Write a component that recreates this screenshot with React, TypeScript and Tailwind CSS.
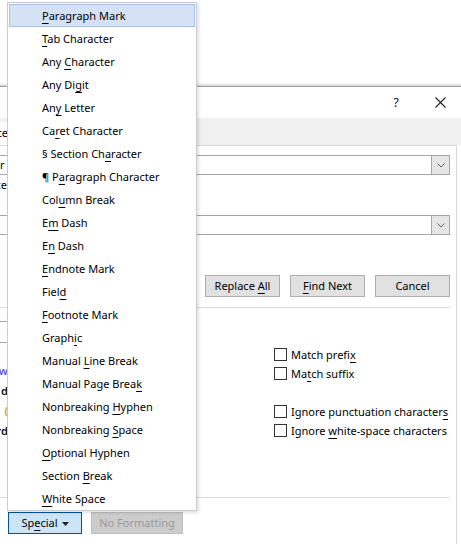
import React from 'react';

const items = [
  '&Paragraph Mark',
  '&Tab Character',
  'Any &Character',
  'Any Di&git',
  'An&y Letter',
  'Ca&ret Character',
  '§ Section Ch&aracter',
  '¶ P&aragraph Character',
  'Col&umn Break',
  'E&m Dash',
  'E&n Dash',
  '&Endnote Mark',
  'Fiel&d',
  '&Footnote Mark',
  'Graph&ic',
  'Manual &Line Break',
  'Manual Page Brea&k',
  'Nonbreaking &Hyphen',
  'Nonbreaking &Space',
  '&Optional Hyphen',
  'Section &Break',
  '&White Space',
];

function L({ t }: { t: string }) {
  const i = t.indexOf('&');
  if (i < 0) return <span className="whitespace-pre">{t}</span>;
  return (
    <span className="whitespace-pre">
      {t.slice(0, i)}
      <span className="underline underline-offset-[3px] decoration-1">{t[i + 1]}</span>
      {t.slice(i + 2)}
    </span>
  );
}

function Chevron() {
  return (
    <svg width="8" height="5" viewBox="0 0 8 5" className="text-[#606060]">
      <path d="M0.5 0.5 L4 4 L7.5 0.5" fill="none" stroke="currentColor" strokeWidth="1" />
    </svg>
  );
}

function Combo({ left }: { left?: string }) {
  return (
    <div className="flex h-[20px] w-[450px]">
      <div className="flex-1 border-y border-[#a6a6a6]">
        {left && <div className="w-[7px] overflow-hidden whitespace-nowrap leading-[18px]">{left}</div>}
      </div>
      <div className="flex h-[20px] w-[19px] items-center justify-center border border-[#a6a6a6] bg-[#e6e6e6]">
        <Chevron />
      </div>
    </div>
  );
}

function Btn({ t }: { t: string }) {
  return (
    <div className="flex h-[22px] w-[75px] items-center justify-center border border-[#adadad] bg-[#e1e1e1] pt-px text-black">
      <L t={t} />
    </div>
  );
}

function Check({ t }: { t: string }) {
  return (
    <div className="flex h-[19px] items-center gap-[4px] whitespace-nowrap">
      <div className="h-[13px] w-[13px] shrink-0 border border-[#333] bg-white" />
      <span className="pt-px text-black">
        <L t={t} />
      </span>
    </div>
  );
}

function Frag({ t, c }: { t: string; c: string }) {
  return (
    <div className={`flex h-[20px] w-[8px] items-center justify-end overflow-hidden whitespace-nowrap font-semibold ${c}`}>
      {t}
    </div>
  );
}

export default function App() {
  return (
    <div className="relative h-[544px] w-[461px] overflow-hidden bg-white font-['Noto_Sans',sans-serif] text-[11px] text-black">
      <div className="h-[83px]" />
      <div className="h-[3px] bg-gradient-to-b from-white to-[#d4d4d4]" />
      <div className="border-t border-[#a0a0a0]">
        {/* title bar */}
        <div className="flex h-[31px] items-center justify-end pr-[15px]">
          <span className="w-[20px] text-center text-[13px] text-[#222]">?</span>
          <svg width="11" height="11" viewBox="0 0 11 11" className="ml-[29px]">
            <path d="M0.5 0.5 L10.5 10.5 M10.5 0.5 L0.5 10.5" stroke="#222" strokeWidth="1.1" />
          </svg>
        </div>
        {/* tab strip */}
        <div className="flex h-[27px] bg-[#f0f0f0]">
          <div className="mt-[4px] flex w-[8px] items-center justify-end overflow-hidden whitespace-nowrap bg-white">
            Replace
          </div>
        </div>
        {/* tab page */}
        <div className="h-[400px] w-[457px] border-t border-r border-[#d9d9d9]">
          <div className="pt-[9px]">
            <Combo left="r p" />
            <div className="flex h-[20px] w-[7px] items-center justify-end overflow-hidden whitespace-nowrap">Replace</div>
            <div className="h-[20px]" />
            <Combo />
          </div>
          <div className="mt-[40px] flex w-[450px] justify-end gap-[10px]">
            <Btn t="Replace &All" />
            <Btn t="&Find Next" />
            <Btn t="Cancel" />
          </div>
          <div className="mt-[10px] h-px w-[450px] bg-[#dcdcdc]" />
          <div className="flex h-[189px]">
            <div className="w-[8px] shrink-0">
              <div className="mt-[13px] h-[22px] border-y border-[#a6a6a6]" />
              <div className="mt-[18px]">
                <Frag t="w" c="text-[#5a5ac8] font-normal" />
                <Frag t="d" c="text-[#111]" />
                <Frag t="(" c="text-[#c9a400]" />
                <Frag t="rd" c="text-[#111]" />
              </div>
            </div>
            <div className="ml-[266px] pt-[37px]">
              <Check t="Match prefi&x" />
              <Check t="Ma&tch suffix" />
              <div className="h-[19px]" />
              <Check t="Ignore punctuation character&s" />
              <Check t="Ignore &white-space characters" />
            </div>
          </div>
          <div className="h-px w-[450px] bg-[#dcdcdc]" />
          <div className="mt-[14px] flex gap-[9px] pl-[8px]">
            <div className="flex h-[22px] w-[74px] items-center justify-center gap-[4px] border border-[#005499] bg-[#cce4f7] pt-px text-black">
              <L t="Sp&ecial" />
              <svg width="7" height="4" viewBox="0 0 7 4">
                <path d="M0 0 L7 0 L3.5 4 Z" fill="#222" />
              </svg>
            </div>
            <div className="flex h-[22px] w-[92px] items-center justify-center border border-[#bfbfbf] bg-[#cccccc] pt-px text-[#9a9a9a]">
              No Formatting
            </div>
          </div>
        </div>
      </div>

      {/* dropdown menu */}
      <div className="absolute left-[7px] top-[2px] w-[190px] border border-[#cccccc] bg-white pt-[1px] shadow-[2px_2px_3px_rgba(0,0,0,0.12)]">
        {items.map((t, i) => (
          <div
            key={t}
            className={`flex h-[23px] items-center pt-px ${i === 0 ? 'mx-[1px] border border-[#a5c1e8] bg-[#d5e2f5] pl-[32px]' : 'pl-[34px]'}`}
          >
            <span className="text-black">
              <L t={t} />
            </span>
          </div>
        ))}
      </div>
    </div>
  );
}
